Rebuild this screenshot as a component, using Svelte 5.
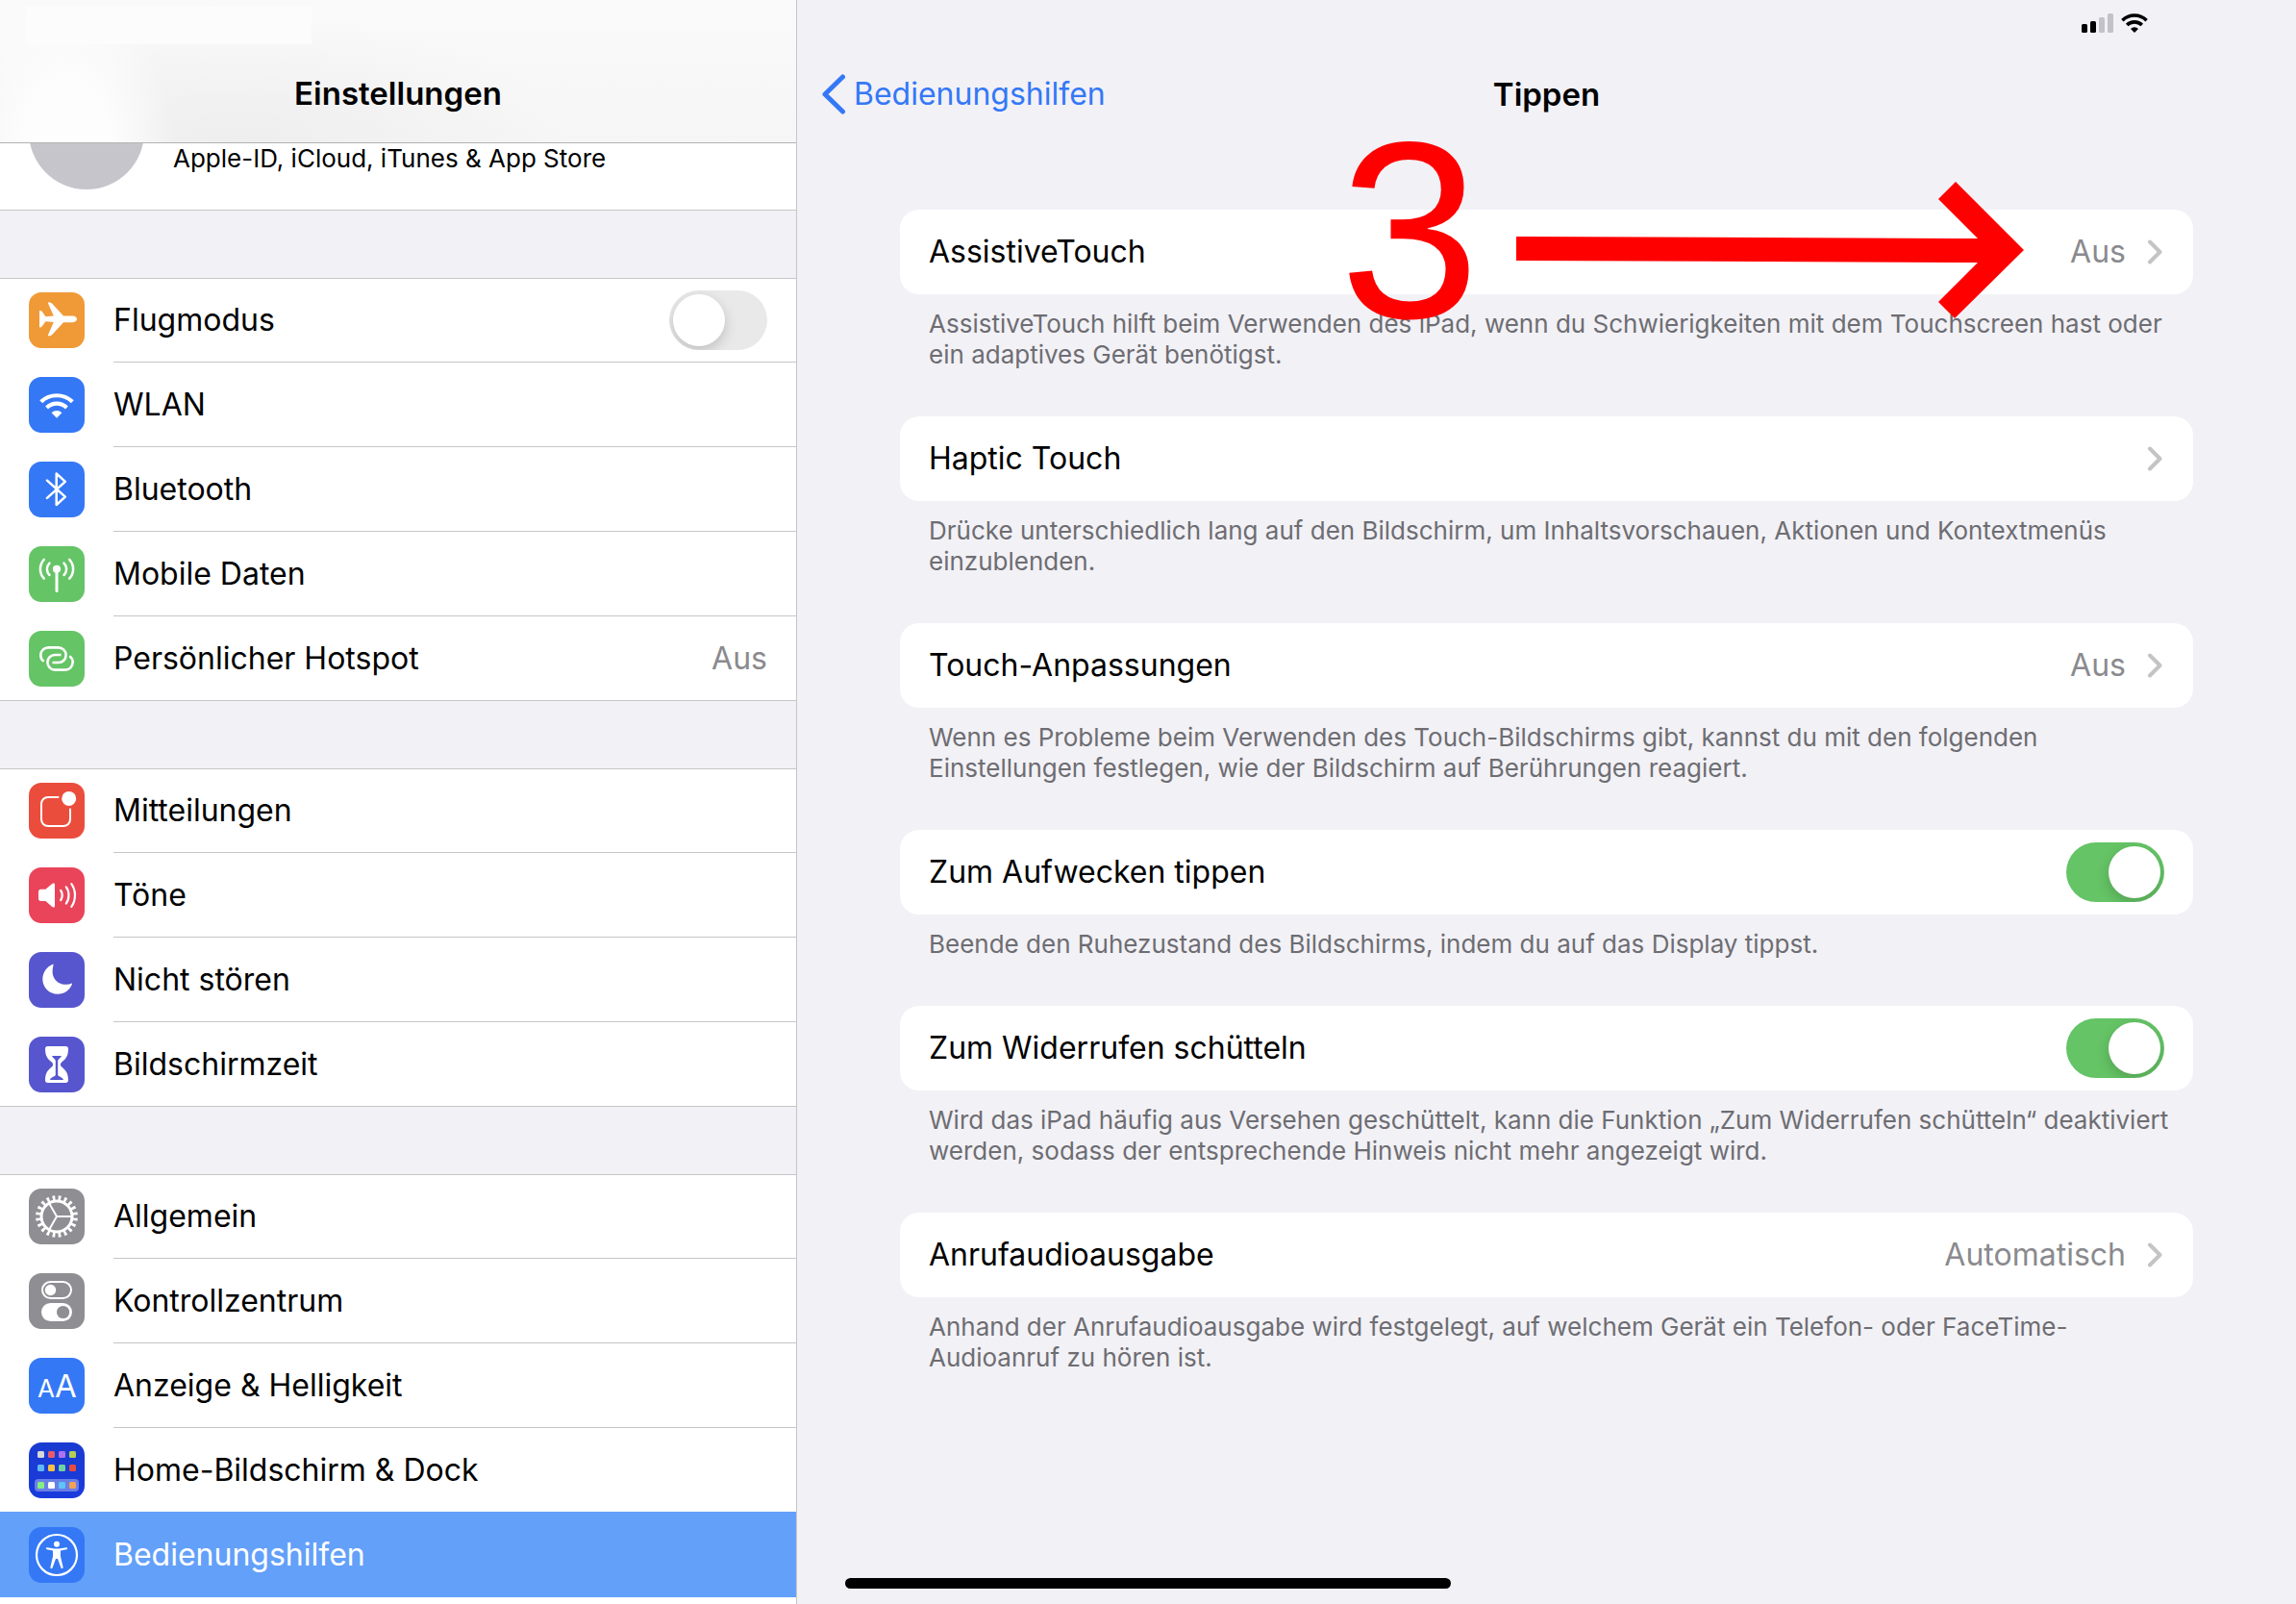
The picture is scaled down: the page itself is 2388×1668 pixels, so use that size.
<script lang="ts">
	type Item = { id: string; label: string; color: string; value?: string; toggle?: boolean };

	const groups: Item[][] = [
		[
			{ id: 'airplane', label: 'Flugmodus', color: '#f09a37', toggle: true },
			{ id: 'wifi', label: 'WLAN', color: '#3478f6' },
			{ id: 'bluetooth', label: 'Bluetooth', color: '#3478f6' },
			{ id: 'cellular', label: 'Mobile Daten', color: '#65c466' },
			{ id: 'hotspot', label: 'Persönlicher Hotspot', color: '#65c466', value: 'Aus' }
		],
		[
			{ id: 'notifications', label: 'Mitteilungen', color: '#eb4d3d' },
			{ id: 'sounds', label: 'Töne', color: '#ea445a' },
			{ id: 'moon', label: 'Nicht stören', color: '#5756ce' },
			{ id: 'hourglass', label: 'Bildschirmzeit', color: '#5756ce' }
		],
		[
			{ id: 'general', label: 'Allgemein', color: '#8e8e93' },
			{ id: 'control', label: 'Kontrollzentrum', color: '#8e8e93' },
			{ id: 'display', label: 'Anzeige & Helligkeit', color: '#3478f6' },
			{ id: 'home', label: 'Home-Bildschirm & Dock', color: '#1a3bd5' },
			{ id: 'accessibility', label: 'Bedienungshilfen', color: '#3478f6' }
		]
	];

	const settings = [
		{
			id: 'assistive',
			label: 'AssistiveTouch',
			value: 'Aus',
			note: 'AssistiveTouch hilft beim Verwenden des iPad, wenn du Schwierigkeiten mit dem Touchscreen hast oder ein adaptives Gerät benötigst.'
		},
		{
			id: 'haptic',
			label: 'Haptic Touch',
			value: '',
			note: 'Drücke unterschiedlich lang auf den Bildschirm, um Inhaltsvorschauen, Aktionen und Kontextmenüs einzublenden.'
		},
		{
			id: 'touch',
			label: 'Touch-Anpassungen',
			value: 'Aus',
			note: 'Wenn es Probleme beim Verwenden des Touch-Bildschirms gibt, kannst du mit den folgenden Einstellungen festlegen, wie der Bildschirm auf Berührungen reagiert.'
		},
		{
			id: 'wake',
			label: 'Zum Aufwecken tippen',
			toggle: true,
			note: 'Beende den Ruhezustand des Bildschirms, indem du auf das Display tippst.'
		},
		{
			id: 'shake',
			label: 'Zum Widerrufen schütteln',
			toggle: true,
			note: 'Wird das iPad häufig aus Versehen geschüttelt, kann die Funktion „Zum Widerrufen schütteln“ deaktiviert werden, sodass der entsprechende Hinweis nicht mehr angezeigt wird.'
		},
		{
			id: 'callaudio',
			label: 'Anrufaudioausgabe',
			value: 'Automatisch',
			note: 'Anhand der Anrufaudioausgabe wird festgelegt, auf welchem Gerät ein Telefon- oder FaceTime-Audioanruf zu hören ist.'
		}
	];

	const homeTiles = [
		['#d8d8d8', '#ea5a6b', '#b072f0', '#b5cf52'],
		['#5fb8f7', '#f7c244', '#6fd3a0', '#e84c3d'],
		['#86ee80', '#ffffff', '#5fc4f7', '#f2a254']
	];
	const tileRows = [9, 23, 41];

	let selected = $state('accessibility');
	let switches: Record<string, boolean> = $state({ airplane: false, wake: true, shake: true });
</script>

{#snippet icon(id: string)}
	<svg viewBox="0 0 58 58" fill="none" stroke-linecap="round" stroke-linejoin="round" aria-hidden="true">
		{#if id === 'airplane'}
			<path fill="#fff" d="M36 24.4H45.5C48.5 24.4 50 26.3 50 27.8S48.5 31.2 45.5 31.2H36L24 44.2C23.4 44.9 22.5 45.2 21.5 45.2H20.3C19.8 45.2 19.7 44.8 19.9 44.4L25.8 31L17.5 30.3L13.6 35.6C13.2 36.3 12.6 36.5 12 36.5H11.5C11.1 36.5 11 36.2 11 35.8V19.8C11 19.3 11.1 19 11.5 19H12C12.6 19 13.2 19.2 13.6 19.8L17.5 25.3L25.8 24.6L19.9 11.2C19.7 10.8 19.8 10.4 20.3 10.4H21.5C22.5 10.4 23.4 10.7 24 11.4Z" />
		{:else if id === 'wifi'}
			<g stroke="#fff" stroke-width="4.2" stroke-linecap="butt">
				<path d="M12.7 25.8A23.5 23.5 0 0 1 45.3 25.8" />
				<path d="M18.6 31.9A15 15 0 0 1 39.4 31.9" />
			</g>
			<path fill="#fff" d="M29 42.7L23.6 37.2A7.7 7.7 0 0 1 34.4 37.2Z" />
		{:else if id === 'bluetooth'}
			<path stroke="#fff" stroke-width="2.5" d="M19 19.6L37.8 36.6L28.7 45V12.4L37.8 20.8L19 37.9" />
		{:else if id === 'cellular'}
			<circle cx="29" cy="23.8" r="4.1" fill="#fff" />
			<path stroke="#fff" stroke-width="3" d="M29 25V46.4" />
			<g stroke="#fff" stroke-width="2.5">
				<path d="M21.5 17.6C18 21 18 26.6 21.5 30M36.5 17.6C40 21 40 26.6 36.5 30" />
				<path d="M15.8 13.8C10.6 19.5 10.6 28 15.8 33.7M42.2 13.8C47.4 19.5 47.4 28 42.2 33.7" />
			</g>
		{:else if id === 'hotspot'}
			<g stroke="#fff" stroke-width="2.6" stroke-linecap="butt">
				<path d="M15.7 31.8C13.5 30.3 12.3 28 12.3 25.4C12.3 20.8 15.8 17.4 20.4 17.4H30.6C35 17.4 38.6 20.8 38.6 25.2S35.2 33 30.8 33H24.5" />
				<path transform="rotate(180 29 29)" d="M15.7 31.8C13.5 30.3 12.3 28 12.3 25.4C12.3 20.8 15.8 17.4 20.4 17.4H30.6C35 17.4 38.6 20.8 38.6 25.2S35.2 33 30.8 33H24.5" />
			</g>
		{:else if id === 'notifications'}
			<path stroke="#fff" stroke-width="2" stroke-linecap="butt" d="M31.3 15H20C16 15 13 18 13 22V38C13 42 16 45 20 45H36C40 45 43 42 43 38V26.7" />
			<circle cx="41.7" cy="16.4" r="7.5" fill="#fff" />
		{:else if id === 'sounds'}
			<path fill="#fff" d="M12.4 22.7H17.4L24.6 16.8C25.6 16 27 16.4 27 17.8V40.2C27 41.6 25.6 42 24.6 41.2L17.4 35H12.4C11 35 10 34 10 32.6V25.1C10 23.7 11 22.7 12.4 22.7Z" />
			<path stroke="#fff" stroke-width="2.2" d="M33.2 24C35.2 26.8 35.2 31.2 33.2 34M38.8 20.4C42.4 25 42.4 33 38.8 37.6M44.3 17.2C49.2 24 49.2 34 44.3 40.8" />
		{:else if id === 'moon'}
			<path fill="#fff" d="M25.6 13.2C25.8 12.6 25.2 12.6 24.7 12.8C18.5 15.5 14.3 21.5 14.3 28.3C14.3 37 21.3 43.8 30 43.8C36.8 43.8 42.5 39.6 44.9 33.5C45.1 32.9 45 32.4 44.2 32.7C42.6 33.3 40.4 33.8 38.2 33.8C30.4 33.8 24.6 28 24.6 20.2C24.6 17.6 25 15.3 25.6 13.2Z" />
		{:else if id === 'hourglass'}
			<path fill="#fff" d="M19.5 10H38.5C40 10 41 11 41 12.4C41 20 38.5 23 34.2 26.6C32.4 28.1 32.4 29.9 34.2 31.4C38.5 35 41 38 41 45.6C41 47 40 48 38.5 48H19.5C18 48 17 47 17 45.6C17 38 19.5 35 23.8 31.4C25.6 29.9 25.6 28.1 23.8 26.6C19.5 23 17 20 17 12.4C17 11 18 10 19.5 10Z" />
			<path fill="#5756ce" d="M24 20H34C33.4 22 30.8 22.8 30.2 25V40C30.6 41.6 35.4 42 36 45H22C22.6 42 27.4 41.6 27.8 40V25C27.2 22.8 24.6 22 24 20Z" />
		{:else if id === 'general'}
			<circle cx="29" cy="29" r="16" stroke="#fff" stroke-width="3" />
			<circle cx="29" cy="29" r="19.4" stroke="#fff" stroke-width="5" stroke-linecap="butt" pathLength="80" stroke-dasharray="1.8 2.2" stroke-dashoffset="-1.1" />
			<path stroke="#fff" stroke-width="2" d="M29 29H45M29 29L21 15.1M29 29L21 42.9" />
		{:else if id === 'control'}
			<rect x="14" y="9" width="30" height="17" rx="8.5" stroke="#fff" stroke-width="2" />
			<circle cx="22.5" cy="17.5" r="5.7" fill="#fff" />
			<rect x="13" y="31" width="32" height="19" rx="9.5" fill="#fff" />
			<circle cx="35.6" cy="40.5" r="6.6" fill="#8e8e93" />
		{:else if id === 'display'}
			<text x="9" y="41" font-size="26" fill="#fff">A</text>
			<text x="27" y="41" font-size="33" fill="#fff">A</text>
		{:else if id === 'home'}
			<rect x="6" y="38" width="46" height="13" rx="4" fill="#fff" fill-opacity=".35" />
			{#each homeTiles as row, r}
				{#each row as fill, c}
					<rect x={9 + c * 11} y={tileRows[r]} width="7" height="7" rx="1.5" {fill} />
				{/each}
			{/each}
		{:else if id === 'accessibility'}
			<circle cx="29" cy="29" r="21" stroke="#fff" stroke-width="2.2" />
			<circle cx="29" cy="17.8" r="3" fill="#fff" />
			<path fill="#fff" d="M19 21.3L27 22.4H31L39 21.3C40.4 21.2 40.6 22.9 39.3 23.2L33 24.6V30.5L35.6 41.8C35.8 43.3 33.9 43.7 33.4 42.3L30 33H28L24.6 42.3C24.1 43.7 22.2 43.3 22.4 41.8L25 30.5V24.6L18.7 23.2C17.4 22.9 17.6 21.2 19 21.3Z" />
		{/if}
	</svg>
{/snippet}

{#snippet toggle(id: string, label: string)}
	<input class="switch" type="checkbox" role="switch" id="switch-{id}" aria-label={label} bind:checked={switches[id]} />
{/snippet}

<div class="page">
	<aside class="sidebar">
		<header class="sidebar-header">
			<h1>Einstellungen</h1>
		</header>

		<div class="profile">
			<span class="avatar"></span>
			<span class="profile-text">Apple-ID, iCloud, iTunes &amp; App Store</span>
		</div>

		<nav>
			{#each groups as group}
				<ul class="group">
					{#each group as item}
						<li class:active={selected === item.id}>
							<span class="icon icon-{item.id}" style="background-color: {item.color}">
								{@render icon(item.id)}
							</span>
							<div class="row">
								{#if item.toggle}
									<label class="row-label" for="switch-{item.id}">{item.label}</label>
									{@render toggle(item.id, item.label)}
								{:else}
									<button class="row-label" onclick={() => (selected = item.id)}>{item.label}</button>
									{#if item.value}<span class="value">{item.value}</span>{/if}
								{/if}
							</div>
						</li>
					{/each}
				</ul>
			{/each}
		</nav>
	</aside>

	<main class="detail">
		<div class="status">
			<svg class="bars" viewBox="0 0 33 20" aria-hidden="true">
				<rect x="0" y="11" width="6" height="9" rx="1.5" />
				<rect x="9" y="8" width="6" height="12" rx="1.5" />
				<rect class="dim" x="18" y="4" width="6" height="16" rx="1.5" />
				<rect class="dim" x="27" y="0" width="6" height="20" rx="1.5" />
			</svg>
			<svg class="status-wifi" viewBox="0 0 28 20" fill="none" aria-hidden="true">
				<g stroke="#000" stroke-width="3.6">
					<path d="M1.4 7.2A18 18 0 0 1 26.6 7.2" />
					<path d="M6.2 12.1A11 11 0 0 1 21.8 12.1" />
				</g>
				<path fill="#000" d="M14 20L10 16A5.6 5.6 0 0 1 18 16Z" />
			</svg>
		</div>

		<header class="detail-header">
			<a class="back" href="#bedienungshilfen">
				<svg viewBox="0 0 26 42" aria-hidden="true">
					<path d="M22.5 3L4 21L22.5 39" />
				</svg>
				Bedienungshilfen
			</a>
			<h2>Tippen</h2>
		</header>

		<div class="cards">
			{#each settings as item}
				<section>
					<div class="card">
						{#if item.toggle}
							<label class="row-label" for="switch-{item.id}">{item.label}</label>
							{@render toggle(item.id, item.label)}
						{:else}
							<button class="row-label">{item.label}</button>
							<span class="value">{item.value}</span>
							<svg class="chevron" viewBox="0 0 16 26" aria-hidden="true">
								<path d="M3 2.5L13.5 13L3 23.5" />
							</svg>
						{/if}
					</div>
					<p class="note">{item.note}</p>
				</section>
			{/each}

			<div class="marker" aria-hidden="true">
				<span class="marker-number">3</span>
				<svg class="marker-arrow" viewBox="0 0 528 142">
					<path fill="#f00" d="M0 57L480 59L439 18L457 0L528 71L456 142L439 125L480 84L0 82Z" />
				</svg>
			</div>
		</div>
	</main>

	<div class="home-indicator"></div>
</div>

<style>
	:global(body) {
		background: #f2f1f6;
	}

	.page {
		display: grid;
		grid-template-columns: minmax(0, 829fr) minmax(0, 1559fr);
		min-height: 100vh;
		font-family: Inter, 'Liberation Sans', sans-serif;
		font-size: 32px;
		line-height: 40px;
		color: #000;
		background: #f2f1f6;
	}

	h1,
	h2 {
		margin: 0;
		font-size: 33px;
		font-weight: 600;
	}

	button {
		padding: 0;
		border: none;
		background: none;
		font: inherit;
		color: inherit;
		text-align: left;
		cursor: pointer;
	}

	.sidebar {
		display: flex;
		flex-direction: column;
		border-right: 1px solid #c6c6c8;
	}

	.sidebar-header {
		position: relative;
		display: flex;
		align-items: flex-end;
		justify-content: center;
		box-sizing: border-box;
		height: 149px;
		padding-bottom: 31px;
		border-bottom: 1px solid #b2b2b4;
		background:
			radial-gradient(ellipse 110px 150px at 70px 100%, #fdfdfd 40%, rgba(253, 253, 253, 0) 100%),
			radial-gradient(ellipse 340px 130px at 250px 100%, #eeeeee, rgba(238, 238, 238, 0) 100%),
			linear-gradient(#fafafa, #f6f6f6);
	}

	.sidebar-header::before {
		content: '';
		position: absolute;
		left: 27px;
		top: 6px;
		width: 297px;
		height: 40px;
		background: #fcfcfc;
	}

	.profile {
		display: flex;
		align-items: flex-end;
		gap: 30px;
		box-sizing: border-box;
		height: 70px;
		padding: 0 30px 21px;
		border-bottom: 1px solid #c6c6c8;
		background: #fff;
		overflow: hidden;
	}

	.avatar {
		flex: none;
		width: 120px;
		height: 120px;
		border-radius: 50%;
		background: #c6c5cb;
	}

	.profile-text {
		padding-bottom: 12px;
		font-size: 26px;
		white-space: nowrap;
	}

	nav {
		display: flex;
		flex-direction: column;
		flex: 1;
		gap: 70px;
		padding-top: 70px;
	}

	.group {
		margin: 0;
		padding: 0;
		list-style: none;
		background: #fff;
		box-shadow: inset 0 1px #c6c6c8;
	}

	.group:last-child {
		flex: 1;
	}

	.group li {
		display: flex;
		align-items: center;
		height: 88px;
		padding-left: 30px;
	}

	.group:not(:last-child) li:last-child {
		box-shadow: inset 0 -1px #c6c6c8;
	}

	.icon {
		flex: none;
		width: 58px;
		height: 58px;
		margin-right: 30px;
		border-radius: 13px;
	}

	.icon svg {
		display: block;
	}

	.icon-home {
		background-image: linear-gradient(#1a3bd0, #1a3bdc);
	}

	.row {
		display: flex;
		align-items: center;
		flex: 1;
		align-self: stretch;
		min-width: 0;
		padding-right: 30px;
		box-shadow: inset 0 -1px #c6c6c8;
	}

	.row-label {
		flex: 1;
		align-self: stretch;
		display: flex;
		align-items: center;
		white-space: nowrap;
	}

	.value {
		color: #8a8a8e;
	}

	.group li.active {
		height: 89px;
		margin-top: -1px;
		color: #fff;
		background: #63a0f9;
	}

	.group li.active .row,
	.group li:has(+ .active) .row {
		box-shadow: none;
	}

	.switch {
		appearance: none;
		flex: none;
		width: 102px;
		height: 62px;
		margin: 0;
		padding: 4px;
		box-sizing: border-box;
		border-radius: 31px;
		background: #e9e9ea;
		overflow: hidden;
		cursor: pointer;
	}

	.switch::before {
		content: '';
		display: block;
		width: 54px;
		height: 54px;
		border-radius: 50%;
		background: #fff;
		box-shadow: 0 5px 14px rgba(0, 0, 0, 0.18);
	}

	.switch:checked {
		background: #65c466;
	}

	.switch:checked::before {
		margin-left: auto;
	}

	.detail {
		display: flex;
		flex-direction: column;
	}

	.status {
		display: flex;
		justify-content: flex-end;
		gap: 8px;
		height: 20px;
		padding: 14px 154px 0 0;
	}

	.bars {
		width: 33px;
		height: 20px;
	}

	.bars .dim {
		fill: #c3c2c8;
	}

	.status-wifi {
		width: 28px;
		height: 20px;
	}

	.detail-header {
		display: grid;
		grid-template-columns: 1fr auto 1fr;
		align-items: center;
		height: 44px;
		padding: 42px 25px 0;
	}

	.back {
		display: flex;
		align-items: center;
		gap: 8px;
		color: #3478f6;
		text-decoration: none;
	}

	.back svg {
		width: 26px;
		height: 42px;
	}

	.back path {
		fill: none;
		stroke: #3478f6;
		stroke-width: 5;
		stroke-linecap: round;
		stroke-linejoin: round;
	}

	.cards {
		position: relative;
		padding: 98px 107px 0;
	}

	.card {
		display: flex;
		align-items: center;
		height: 88px;
		padding: 0 30px;
		border-radius: 20px;
		background: #fff;
	}

	.chevron {
		width: 16px;
		height: 26px;
		margin: 0 2px 0 22px;
	}

	.chevron path {
		fill: none;
		stroke: #c4c4c6;
		stroke-width: 4;
		stroke-linecap: round;
		stroke-linejoin: round;
	}

	.note {
		margin: 0;
		padding: 15px 20px 48px 30px;
		font-size: 26px;
		line-height: 32px;
		color: #6d6d72;
	}

	/* step number and arrow lying over the first card */
	.marker {
		position: absolute;
		top: 0;
		right: 283px;
		display: flex;
		gap: 38px;
		height: 280px;
		pointer-events: none;
	}

	.marker-number {
		font-family: 'Liberation Sans', Arial, sans-serif;
		font-size: 262px;
		line-height: 240px;
		color: #f00;
	}

	.marker-arrow {
		align-self: center;
		width: 528px;
		height: 142px;
	}

	.home-indicator {
		position: fixed;
		left: 50%;
		bottom: 16px;
		width: 630px;
		height: 11px;
		border-radius: 6px;
		background: #000;
		transform: translateX(-50%);
	}
</style>
